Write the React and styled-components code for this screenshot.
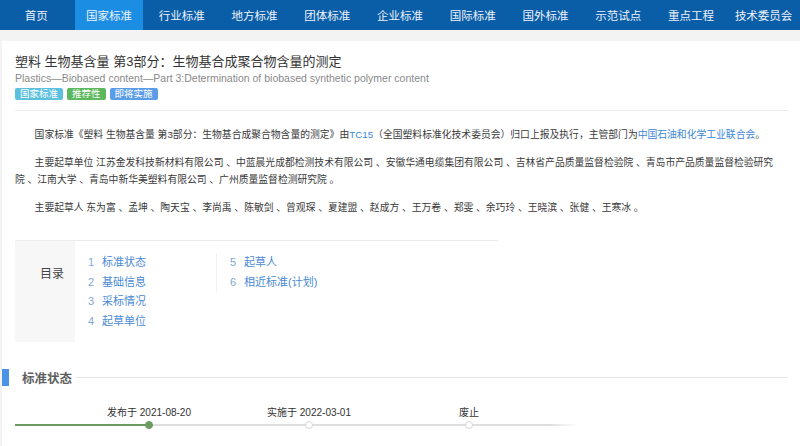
import React from "react";
import styled, { createGlobalStyle } from "styled-components";

const Global = createGlobalStyle`
  html, body { margin: 0; padding: 0; background: #f3f3f3; }
  body { font-family: "Liberation Sans", "Noto Sans CJK SC", sans-serif; color: #333; }
  * { box-sizing: border-box; }
`;

const Page = styled.div`
  width: 800px;
  height: 446px;
  overflow: hidden;
  display: flex;
  flex-direction: column;
`;

const Nav = styled.nav`
  height: 30px;
  background: #0a5ea8;
  display: grid;
  grid-template-columns: repeat(11, 1fr);
  flex-shrink: 0;
`;

const NavItem = styled.a`
  display: flex;
  align-items: center;
  justify-content: center;
  margin: 0 ${(p) => (p.$active ? "2px" : "0")};
  font-size: 11.5px;
  color: #eef3fa;
  white-space: nowrap;
  background: ${(p) => (p.$active ? "#1b8ee4" : "transparent")};
`;

const Card = styled.main`
  margin: 11px 0 0 2px;
  background: #fff;
  flex: 1;
  padding: 0 12px 0 13px;
`;

const Header = styled.header`
  padding: 12px 0 10px;
  border-bottom: 1px solid #ececec;
`;

const Title = styled.h1`
  margin: 0;
  font-size: 13px;
  line-height: 18px;
  font-weight: normal;
  color: #333;
`;

const SubTitle = styled.div`
  font-size: 10.5px;
  line-height: 14px;
  color: #8a8a8a;
`;

const Badges = styled.div`
  display: flex;
  gap: 4px;
  margin-top: 3px;
`;

const Badge = styled.span`
  height: 12px;
  line-height: 12px;
  padding: 0 5px;
  font-size: 9.5px;
  color: #fff;
  border-radius: 2px;
  background: ${(p) => p.$bg};
`;

const Intro = styled.section`
  padding: 15px 7px 0 0;
`;

const Para = styled.p`
  margin: 0 0 11px;
  font-size: 9.8px;
  line-height: 17px;
  text-indent: 2em;
  color: #3a3a3a;
`;

const Link = styled.a`
  color: #3b86d8;
  font-family: "Liberation Sans", "Noto Sans CJK SC", sans-serif;
`;

const Toc = styled.div`
  margin-top: 24px;
  width: 483px;
  display: flex;
  border-top: 1px solid #ebebeb;
  height: 102px;
`;

const TocLabel = styled.div`
  width: 60px;
  background: #f7f7f7;
  padding: 25px 11px 0 0;
  text-align: right;
  font-size: 12px;
  line-height: 16px;
  font-weight: 400;
  color: #444;
`;

const TocBody = styled.div`
  flex: 1;
  display: flex;
  align-items: flex-start;
  padding: 12px 0 0 13px;
`;

const TocCol = styled.ul`
  list-style: none;
  margin: 0;
  padding: 0 0 0 ${(p) => (p.$divided ? "13px" : "0")};
  width: ${(p) => (p.$divided ? "auto" : "128px")};
  border-left: ${(p) => (p.$divided ? "1px solid #f0f0f0" : "none")};
`;

const TocItem = styled.li`
  font-size: 11px;
  line-height: 19.5px;
  color: #4a8ad6;
  white-space: nowrap;
`;

const TocNum = styled.span`
  display: inline-block;
  width: 11px;
  color: #7fa7d9;
`;

const SectionHead = styled.div`
  margin: 27px 0 0 -13px;
  display: flex;
  align-items: center;
  height: 17px;
`;

const SectionBar = styled.span`
  width: 7px;
  height: 17px;
  background: #4a94e8;
`;

const SectionTitle = styled.h2`
  margin: 0 5px 0 13px;
  font-size: 12.5px;
  font-weight: bold;
  color: #5f5f5f;
`;

const SectionLine = styled.span`
  flex: 1;
  height: 1px;
  background: #e6e6e6;
`;

const Timeline = styled.div`
  margin-top: 20px;
  display: flex;
  align-items: flex-end;
`;

const Lead = styled.div`
  width: 54px;
  height: 10px;
  background: linear-gradient(#6d9a5f, #6d9a5f) center / 100% 2px no-repeat;
`;

const Tail = styled.div`
  width: 29px;
  height: 10px;
  background: linear-gradient(to right, #dedede, rgba(222, 222, 222, 0)) center / 100% 2px no-repeat;
`;

const Step = styled.div`
  width: 160px;
  flex-shrink: 0;
  display: flex;
  flex-direction: column;
  align-items: center;
`;

const StepLabel = styled.div`
  font-size: 10px;
  line-height: 14px;
  color: #333;
  white-space: nowrap;
`;

const Rail = styled.div`
  width: 100%;
  height: 10px;
  display: flex;
  align-items: center;
  justify-content: center;
  background: ${(p) =>
      p.$half
        ? "linear-gradient(to right, #6d9a5f 50%, #dedede 50%)"
        : "linear-gradient(#dedede, #dedede)"}
    center / 100% 2px no-repeat;
`;

const Dot = styled.span`
  width: 8px;
  height: 8px;
  border-radius: 50%;
  background: ${(p) => (p.$done ? "#6d9a5f" : "#fff")};
  border: 1px solid ${(p) => (p.$done ? "#6d9a5f" : "#d6d6d6")};
`;

const navItems = ["首页", "国家标准", "行业标准", "地方标准", "团体标准", "企业标准", "国际标准", "国外标准", "示范试点", "重点工程", "技术委员会"];

const steps = [
  { label: "发布于 2021-08-20", done: true },
  { label: "实施于 2022-03-01", done: false },
  { label: "废止", done: false },
];

export default function App() {
  return (
    <Page>
      <Global />
      <Nav>
        {navItems.map((n, i) => (
          <NavItem key={n} $active={i === 1}>{n}</NavItem>
        ))}
      </Nav>
      <Card>
        <Header>
          <Title>塑料 生物基含量 第3部分：生物基合成聚合物含量的测定</Title>
          <SubTitle>Plastics—Biobased content—Part 3:Determination of biobased synthetic polymer content</SubTitle>
          <Badges>
            <Badge $bg="#5bc0de">国家标准</Badge>
            <Badge $bg="#5cb85c">推荐性</Badge>
            <Badge $bg="#5b9ce8">即将实施</Badge>
          </Badges>
        </Header>
        <Intro>
          <Para>
            国家标准《塑料 生物基含量 第3部分：生物基合成聚合物含量的测定》由<Link>TC15</Link>（全国塑料标准化技术委员会）归口上报及执行，主管部门为<Link>中国石油和化学工业联合会</Link>。
          </Para>
          <Para>
            主要起草单位 江苏金发科技新材料有限公司 、中蓝晨光成都检测技术有限公司 、安徽华通电缆集团有限公司 、吉林省产品质量监督检验院 、青岛市产品质量监督检验研究院 、江南大学 、青岛中新华美塑料有限公司 、广州质量监督检测研究院 。
          </Para>
          <Para>
            主要起草人 东为富 、孟坤 、陶天宝 、李尚禹 、陈敏剑 、曾观琛 、夏建盟 、赵成方 、王万卷 、郑雯 、余巧玲 、王晓滨 、张健 、王寒冰 。
          </Para>
        </Intro>
        <Toc>
          <TocLabel>目录</TocLabel>
          <TocBody>
            <TocCol>
              <TocItem><TocNum>1</TocNum> 标准状态</TocItem>
              <TocItem><TocNum>2</TocNum> 基础信息</TocItem>
              <TocItem><TocNum>3</TocNum> 采标情况</TocItem>
              <TocItem><TocNum>4</TocNum> 起草单位</TocItem>
            </TocCol>
            <TocCol $divided>
              <TocItem><TocNum>5</TocNum> 起草人</TocItem>
              <TocItem><TocNum>6</TocNum> 相近标准(计划)</TocItem>
            </TocCol>
          </TocBody>
        </Toc>
        <SectionHead>
          <SectionBar />
          <SectionTitle>标准状态</SectionTitle>
          <SectionLine />
        </SectionHead>
        <Timeline>
          <Lead />
          {steps.map((s, i) => (
            <Step key={s.label}>
              <StepLabel>{s.label}</StepLabel>
              <Rail $half={i === 0}>
                <Dot $done={s.done} />
              </Rail>
            </Step>
          ))}
          <Tail />
        </Timeline>
      </Card>
    </Page>
  );
}
